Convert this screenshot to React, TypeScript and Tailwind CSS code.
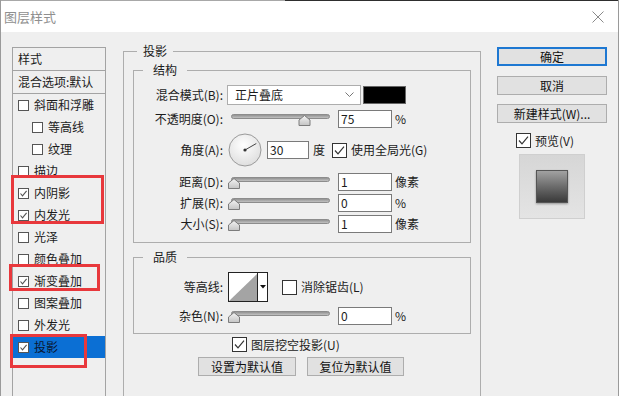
import React from "react";

type Effect = { name: string; checked?: boolean; indent?: boolean; active?: boolean };

const effects: Effect[] = [
  { name: "斜面和浮雕" },
  { name: "等高线", indent: true },
  { name: "纹理", indent: true },
  { name: "描边" },
  { name: "内阴影", checked: true },
  { name: "内发光", checked: true },
  { name: "光泽" },
  { name: "颜色叠加" },
  { name: "渐变叠加", checked: true },
  { name: "图案叠加" },
  { name: "外发光" },
  { name: "投影", checked: true, active: true },
];

function SmallCheck({ checked }: { checked?: boolean }) {
  return (
    <span className="flex h-[11px] w-[11px] shrink-0 items-center justify-center border border-[#555] bg-white">
      {checked && (
        <svg width="9" height="9" viewBox="0 0 9 9">
          <path d="M1.5 4.5 L3.5 6.8 L7.6 1.8" fill="none" stroke="#555" strokeWidth="1.1" />
        </svg>
      )}
    </span>
  );
}

function Check({ checked }: { checked?: boolean }) {
  return (
    <span className="flex h-[15px] w-[15px] shrink-0 items-center justify-center border border-[#333] bg-white">
      {checked && (
        <svg width="13" height="13" viewBox="0 0 13 13">
          <path d="M2 6.5 L5 9.8 L11 2.6" fill="none" stroke="#333" strokeWidth="1.2" />
        </svg>
      )}
    </span>
  );
}

function Slider({ pct }: { pct: number }) {
  const cx = 6 + pct * 94;
  return (
    <svg width="106" height="18" className="shrink-0">
      <defs>
        <linearGradient id="trk" x1="0" y1="0" x2="0" y2="1">
          <stop offset="0" stopColor="#8a8a8a" />
          <stop offset="1" stopColor="#c9c9c9" />
        </linearGradient>
        <linearGradient id="thm" x1="0" y1="0" x2="0" y2="1">
          <stop offset="0" stopColor="#f4f4f4" />
          <stop offset="1" stopColor="#c4c4c4" />
        </linearGradient>
      </defs>
      <rect x="3.5" y="4.5" width="98" height="4" rx="2" fill="url(#trk)" stroke="#8c8c8c" />
      <path
        d={`M${cx} 5.5 L${cx + 5.5} 10 V15.5 H${cx - 5.5} V10 Z`}
        fill="url(#thm)"
        stroke="#7c7c7c"
      />
    </svg>
  );
}

function Field({ value, w = "w-[54px]" }: { value: string; w?: string }) {
  return (
    <div className={`flex h-[18px] ${w} shrink-0 items-center border border-[#7a7a7a] bg-white pl-[2px] leading-none`}>
      {value}
    </div>
  );
}

function SliderRow({ label, pct, value, unit, top }: { label: string; pct: number; value: string; unit: string; top: string }) {
  return (
    <div className={`flex h-[18px] items-center ${top}`}>
      <span className="w-[89px] shrink-0 text-right">{label}</span>
      <span className="ml-[5px]">
        <Slider pct={pct} />
      </span>
      <span className="ml-[4px]">
        <Field value={value} />
      </span>
      <span className="ml-[3px]">{unit}</span>
    </div>
  );
}

function Button({ label, wide }: { label: string; wide?: string }) {
  return (
    <button className={`flex h-[19px] ${wide} items-center justify-center border border-[#adadad] bg-[#e1e1e1] leading-none text-[#111]`}>
      {label}
    </button>
  );
}

export default function App() {
  return (
    <div className="relative h-[396px] w-[619px] overflow-hidden border-x border-[#9a9a9a] bg-[#efefef] font-['Noto_Sans_CJK_SC',sans-serif] text-[12px] leading-[14px] text-[#1b1b1b]">
      <div className="flex h-[1px]">
        <div className="w-[284px] bg-[#a8a8a8]" />
        <div className="flex-1 bg-[#2e2e2e]" />
      </div>
      <div className="flex h-[31px] items-center justify-between bg-white pl-[3px] pr-[14px]">
        <span className="text-[13px] text-[#8f8f8f]">图层样式</span>
        <svg width="12" height="12" viewBox="0 0 12 12">
          <path d="M0.5 0.5 L11.5 11.5 M11.5 0.5 L0.5 11.5" stroke="#8a8a8a" strokeWidth="1" />
        </svg>
      </div>

      <div className="flex h-[364px] pl-[11px] pt-[11px]">
        {/* styles list */}
        <div className="mt-[4px] flex h-[360px] w-[94px] shrink-0 flex-col border-x border-t border-[#a3a3a3]">
          <div className="flex h-[23px] items-center border-b border-[#a3a3a3] pl-[5px]">样式</div>
          <div className="flex h-[23px] items-center whitespace-nowrap border-b border-[#a3a3a3] pl-[5px]">混合选项:默认</div>
          {effects.map((e) => (
            <div
              key={e.name}
              className={`flex h-[22px] items-center gap-[5px] whitespace-nowrap ${e.indent ? "pl-[19px]" : "pl-[5px]"} ${e.active ? "bg-[#0b6fd4] text-[#0a1630]" : ""}`}
            >
              <SmallCheck checked={e.checked} />
              <span>{e.name}</span>
            </div>
          ))}
        </div>

        {/* drop shadow settings */}
        <fieldset className="ml-[17px] h-[400px] w-[358px] shrink-0 border border-[#adadad]">
          <legend className="ml-[13px] px-[6px] leading-[16px]">投影</legend>
          <div className="px-[9px] pt-[3px]">
            <fieldset className="border border-[#adadad] pb-[9px]">
              <legend className="ml-[9px] px-[10px] leading-[16px]">结构</legend>
              <div className="mt-[7px] flex h-[20px] items-center">
                <span className="w-[89px] shrink-0 text-right">混合模式(B):</span>
                <div className="ml-[4px] flex h-[20px] w-[134px] items-center justify-between border border-[#adadad] bg-white pl-[7px] pr-[6px]">
                  <span>正片叠底</span>
                  <svg width="9" height="6" viewBox="0 0 9 6">
                    <path d="M0.5 0.5 L4.5 4.5 L8.5 0.5" fill="none" stroke="#777" />
                  </svg>
                </div>
                <div className="ml-[2px] h-[18px] w-[43px] border border-[#666] bg-black" />
              </div>
              <SliderRow label="不透明度(O):" pct={0.75} value="75" unit="%" top="mt-[5px]" />
              <div className="mt-[5px] flex h-[34px] items-center">
                <span className="w-[89px] shrink-0 text-right">角度(A):</span>
                <svg width="34" height="34" className="ml-[5px] shrink-0">
                  <defs>
                    <radialGradient id="dial" cx="0.45" cy="0.35" r="0.7">
                      <stop offset="0" stopColor="#ffffff" />
                      <stop offset="1" stopColor="#dcdcdc" />
                    </radialGradient>
                  </defs>
                  <circle cx="17" cy="17" r="16" fill="url(#dial)" stroke="#9a9a9a" />
                  <line x1="17" y1="17" x2="28.3" y2="10.5" stroke="#444" strokeWidth="1" />
                  <circle cx="17" cy="17" r="1.6" fill="#333" />
                </svg>
                <span className="ml-[5px]">
                  <Field value="30" w="w-[42px]" />
                </span>
                <span className="ml-[4px]">度</span>
                <span className="ml-[7px]">
                  <Check checked />
                </span>
                <span className="ml-[4px] whitespace-nowrap">使用全局光(G)</span>
              </div>
              <SliderRow label="距离(D):" pct={0} value="1" unit="像素" top="mt-[6px]" />
              <SliderRow label="扩展(R):" pct={0} value="0" unit="%" top="mt-[3px]" />
              <SliderRow label="大小(S):" pct={0} value="1" unit="像素" top="mt-[3px]" />
            </fieldset>

            <fieldset className="mt-[6px] border border-[#adadad] pb-[8px]">
              <legend className="ml-[9px] px-[10px] leading-[16px]">品质</legend>
              <div className="mt-[7px] flex h-[30px] items-center">
                <span className="w-[89px] shrink-0 text-right">等高线:</span>
                <div className="ml-[5px] flex h-[30px] w-[40px] border border-[#222] bg-white">
                  <svg width="29" height="28" className="shrink-0 border-r border-[#222]">
                    <path d="M0 28 L29 0 V28 Z" fill="#a4a4a4" />
                  </svg>
                  <div className="flex flex-1 items-center justify-center">
                    <svg width="6" height="4" viewBox="0 0 6 4">
                      <path d="M0 0 H6 L3 3.5 Z" fill="#111" />
                    </svg>
                  </div>
                </div>
                <span className="ml-[14px]">
                  <Check />
                </span>
                <span className="ml-[4px] whitespace-nowrap">消除锯齿(L)</span>
              </div>
              <SliderRow label="杂色(N):" pct={0} value="0" unit="%" top="mt-[5px]" />
            </fieldset>

            <div className="mt-[3px] flex h-[15px] items-center pl-[99px]">
              <Check checked />
              <span className="ml-[4px] whitespace-nowrap">图层挖空投影(U)</span>
            </div>
            <div className="mt-[5px] flex gap-[11px] pl-[65px]">
              <Button label="设置为默认值" wide="w-[98px]" />
              <Button label="复位为默认值" wide="w-[97px]" />
            </div>
          </div>
        </fieldset>

        {/* buttons + preview */}
        <div className="ml-[16px] mt-[4px] flex w-[110px] shrink-0 flex-col">
          <button className="flex h-[19px] items-center justify-center border-2 border-[#1e78d2] bg-[#e1e1e1] leading-none text-[#111]">
            确定
          </button>
          <div className="mt-[10px]">
            <Button label="取消" wide="w-full" />
          </div>
          <div className="mt-[9px]">
            <Button label="新建样式(W)..." wide="w-full" />
          </div>
          <div className="mt-[10px] flex h-[15px] items-center pl-[19px]">
            <Check checked />
            <span className="ml-[4px]">预览(V)</span>
          </div>
          <div className="ml-[22px] mt-[6px] flex h-[65px] w-[66px] items-center justify-center border border-[#cfcfcf] bg-linear-to-b from-[#d6d6d6] to-[#e4e4e4]">
            <div className="h-[33px] w-[32px] border border-[#555] bg-linear-to-b from-[#a2a2a2] to-[#3a3a3a] shadow-[0_1px_2px_rgba(0,0,0,0.35)]" />
          </div>
        </div>
      </div>

      {/* annotation boxes */}
      <div className="absolute left-[10px] top-[175px] h-[49px] w-[93px] border-[3px] border-[#e8383c]" />
      <div className="absolute left-[8px] top-[264px] h-[27px] w-[91px] border-[3px] border-[#e8383c]" />
      <div className="absolute left-[9px] top-[334px] h-[34px] w-[77px] border-[3px] border-[#e8383c]" />
    </div>
  );
}
